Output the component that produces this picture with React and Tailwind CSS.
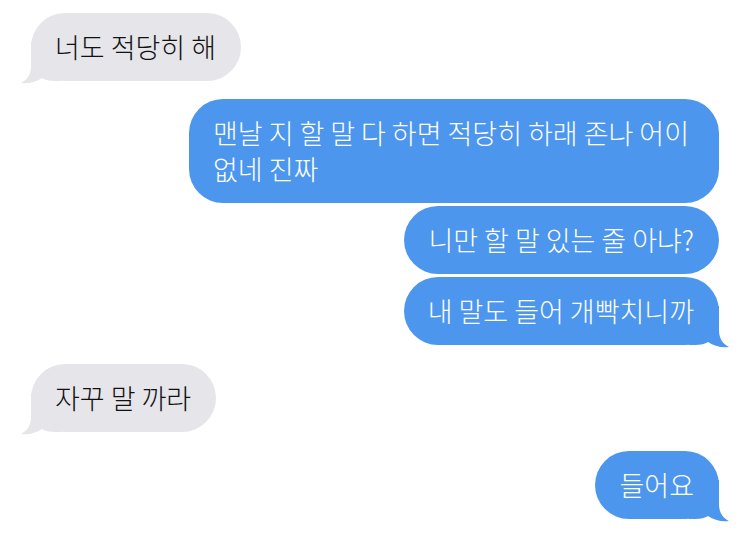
import React from "react";

// Chat messages, top to bottom
const messages = [
  { from: "them", text: "너도 적당히 해", gap: "mt-[13px]", tail: true },
  { from: "me", text: "맨날 지 할 말 다 하면 적당히 하래 존나 어이 없네 진짜", gap: "mt-[18px]", tail: false },
  { from: "me", text: "니만 할 말 있는 줄 아냐?", gap: "mt-[3px]", tail: false },
  { from: "me", text: "내 말도 들어 개빡치니까", gap: "mt-[3px]", tail: true },
  { from: "them", text: "자꾸 말 까라", gap: "mt-[19px]", tail: true },
  { from: "me", text: "들어요", gap: "mt-[19px]", tail: true },
];

function Tail({ side, color }) {
  // classic bubble tail, drawn for the left side and mirrored for the right
  return (
    <svg
      width="40"
      height="42"
      viewBox="0 0 40 42"
      className={
        side === "left"
          ? "absolute -left-[10px] -bottom-[3px]"
          : "absolute -right-[10px] -bottom-[3px] -scale-x-100"
      }
    >
      <path
        d="M10 0 L10 24 C10 33 6 38 0 41 C8 42 15 40 21 36 C24 38 28 39 34 39 L40 39 L40 0 Z"
        fill={color}
      />
    </svg>
  );
}

function Bubble({ msg }) {
  const mine = msg.from === "me";
  const color = mine ? "#4c96ee" : "#e5e5ea";

  return (
    <div
      className={`relative max-w-[530px] ${msg.gap} ${mine ? "self-end" : "self-start"}`}
    >
      {msg.tail && <Tail side={mine ? "right" : "left"} color={color} />}
      <div
        className={`relative break-keep rounded-[34px] py-4 pl-[24px] pr-[25px] text-[27px] font-light leading-[36px] ${
          mine ? "bg-[#4c96ee] text-white" : "bg-[#e5e5ea] text-[#111111]"
        }`}
      >
        {msg.text}
      </div>
    </div>
  );
}

export default function App() {
  return (
    <div
      className="flex h-[541px] w-[750px] flex-col overflow-hidden bg-white px-[31px]"
      style={{ fontFamily: '"Noto Sans CJK KR", "Noto Sans", sans-serif' }}
    >
      {messages.map((m, i) => (
        <Bubble key={i} msg={m} />
      ))}
    </div>
  );
}
